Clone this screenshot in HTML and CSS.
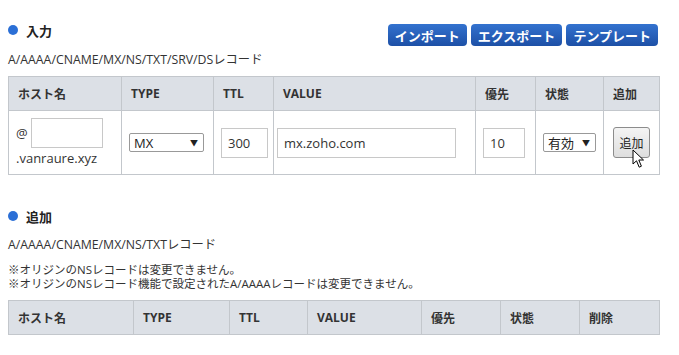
FILE: index.html
```html
<!DOCTYPE html>
<html lang="ja">
<head>
    <meta charset="UTF-8">
    <title>DNSレコード</title>
    <link rel="stylesheet" href="styles.css">
</head>
<body>
    <div class="container">
        <div class="section-head">
            <h2 class="title">入力</h2>
            <div class="tools">
                <button class="blue-button">インポート</button>
                <button class="blue-button">エクスポート</button>
                <button class="blue-button">テンプレート</button>
            </div>
        </div>
        <p class="desc">A/AAAA/CNAME/MX/NS/TXT/SRV/DSレコード</p>
        <table class="records input-table">
            <tr>
                <th class="c-host">ホスト名</th>
                <th class="c-type">TYPE</th>
                <th class="c-ttl">TTL</th>
                <th class="c-value">VALUE</th>
                <th class="c-prio">優先</th>
                <th class="c-state">状態</th>
                <th>追加</th>
            </tr>
            <tr>
                <td>
                    <div class="host-line">@ <input type="text" class="field host-field"></div>
                    <div class="domain">.vanraure.xyz</div>
                </td>
                <td>
                    <span class="select-wrap type-select">
                        <select class="select"><option>MX</option></select>
                        <span class="arrow">▼</span>
                    </span>
                </td>
                <td><input type="text" class="field ttl-field" value="300"></td>
                <td class="value-cell"><input type="text" class="field value-field" value="mx.zoho.com"></td>
                <td><input type="text" class="field prio-field" value="10"></td>
                <td>
                    <span class="select-wrap state-select">
                        <select class="select"><option>有効</option></select>
                        <span class="arrow">▼</span>
                    </span>
                </td>
                <td>
                    <span class="add-wrap">
                        <button class="add-button">追加</button>
                        <svg class="pointer" width="13" height="20" viewBox="0 0 13 20">
                            <path d="M1 1 L1 15 L4.5 11.8 L7.2 18.2 L9.4 17.2 L6.8 11 L11.5 11 Z" fill="#fff" stroke="#000" stroke-width="1" stroke-linejoin="miter"/>
                        </svg>
                    </span>
                </td>
            </tr>
        </table>

        <div class="section-head second">
            <h2 class="title">追加</h2>
        </div>
        <p class="desc">A/AAAA/CNAME/MX/NS/TXTレコード</p>
        <div class="notes">
            <p class="note">※オリジンのNSレコードは変更できません。</p>
            <p class="note">※オリジンのNSレコード機能で設定されたA/AAAAレコードは変更できません。</p>
        </div>
        <table class="records list-table">
            <tr>
                <th class="l-host">ホスト名</th>
                <th class="l-type">TYPE</th>
                <th class="l-ttl">TTL</th>
                <th class="l-value">VALUE</th>
                <th class="l-prio">優先</th>
                <th class="l-state">状態</th>
                <th>削除</th>
            </tr>
        </table>
    </div>
</body>
</html>
```

FILE: styles.css
```css
* {
    box-sizing: border-box;
    margin: 0;
    padding: 0;
}

body {
    font-family: "Open Sans", "Noto Sans CJK JP", sans-serif;
    font-size: 12px;
    color: #333;
    background-color: #fff;
}

.container {
    width: 660px;
    padding: 20px 0 0 8px;
}

.section-head {
    display: flex;
    justify-content: space-between;
    align-items: flex-start;
}

.section-head.second {
    margin-top: 31px;
}

.title {
    display: flex;
    align-items: center;
    height: 20px;
    font-size: 13px;
    font-weight: bold;
    color: #222;
}

.title::before {
    content: "";
    width: 10px;
    height: 10px;
    border-radius: 50%;
    background-color: #2b6fd6;
    margin-right: 8px;
}

.tools {
    display: flex;
    gap: 4px;
    margin-top: 4px;
    margin-right: 2px;
}

.blue-button {
    height: 22px;
    padding: 0 7px;
    border: none;
    border-radius: 4px;
    background: linear-gradient(#3372cf, #1d50a6);
    color: #fff;
    font-family: inherit;
    font-size: 13px;
    font-weight: bold;
}

.desc {
    margin-top: 5px;
    line-height: 18px;
    font-size: 12.3px;
}

.section-head.second + .desc {
    margin-top: 10px;
}

.notes {
    margin-top: 9px;
}

.note {
    height: 14px;
    line-height: 14px;
    font-size: 11.5px;
    white-space: nowrap;
}

.records {
    width: 652px;
    border-collapse: collapse;
    margin-top: 7px;
}

.list-table {
    margin-top: 9px;
}

.records th {
    height: 34px;
    padding: 0 9px;
    text-align: left;
    font-weight: bold;
    background-color: #dce0e6;
    border: 1px solid #c3c7cc;
}

.records td {
    height: 64px;
    padding: 0 5px 0 7px;
    border: 1px solid #c3c7cc;
    vertical-align: middle;
}

.records td.value-cell {
    padding-left: 3px;
}

.c-host { width: 113px; }
.c-type { width: 92px; }
.c-ttl { width: 60px; }
.c-value { width: 202px; }
.c-prio { width: 60px; }
.c-state { width: 68px; }

.l-host { width: 125px; }
.l-type { width: 96px; }
.l-ttl { width: 78px; }
.l-value { width: 114px; }
.l-prio { width: 79px; }
.l-state { width: 79px; }

.host-line {
    display: flex;
    align-items: center;
    gap: 3px;
    font-size: 13px;
}

.domain {
    margin-top: 1px;
    font-size: 13px;
}

.field {
    height: 30px;
    border: 1px solid #c8c8c8;
    padding: 0 6px;
    font-family: inherit;
    font-size: 13px;
    color: #333;
}

.host-field { width: 72px; }
.ttl-field { width: 47px; }
.value-field { width: 179px; }
.prio-field { width: 42px; }

.select-wrap {
    position: relative;
    display: inline-block;
}

.select {
    appearance: none;
    height: 19px;
    border: 1px solid #999;
    border-radius: 2px;
    padding: 0 4px;
    background-color: #fff;
    font-family: inherit;
    font-size: 13px;
    color: #222;
}

.type-select .select { width: 75px; }
.state-select .select { width: 53px; }

.arrow {
    position: absolute;
    right: 6px;
    top: 4px;
    font-size: 8px;
    color: #222;
    pointer-events: none;
}

.add-wrap {
    position: relative;
    display: inline-block;
    margin-left: 2px;
}

.add-button {
    width: 37px;
    height: 31px;
    border: 1px solid #8c8c8c;
    border-radius: 3px;
    background: linear-gradient(#f4f4f4, #dedede);
    font-family: inherit;
    font-size: 12px;
    color: #222;
}

.pointer {
    position: absolute;
    left: 19px;
    top: 22px;
}
```
